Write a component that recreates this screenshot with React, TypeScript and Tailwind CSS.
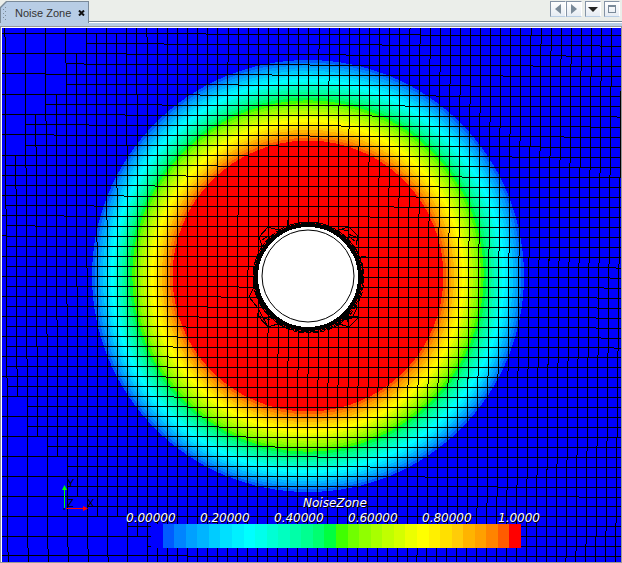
import type { ReactNode } from "react";

const LEVELS = [
  "#0000ff", "#005cff", "#0084ff", "#00a0ff", "#00b4ff", "#00ccff", "#00e0ff", "#00f0ff",
  "#00ffff", "#00ffec", "#00ffd4", "#00ffc0", "#00ffa8", "#00ff90", "#00ff70", "#00ff40",
  "#40ff00", "#70ff00", "#90ff00", "#a8ff00", "#c0ff00", "#d4ff00", "#ecff00", "#ffff00",
  "#fff000", "#ffe000", "#ffcc08", "#ffb400", "#ffa000", "#ff8400", "#ff5c00", "#ff0000",
];

const CENTER = { x: 308, y: 276 };
const OUTER = 216;
const INNER = 135.5;

const LEFT = 2;
const TOP = 28;
const WIDTH = 619;
const HEIGHT = 534;

// mesh lines converge slightly towards the lower right (perspective view)
function colX(i: number, y: number) {
  const x = 5.97 + 10.106 * i - 0.00072 * i * i;
  return x + (0.00585 - 0.0000283 * (x - 5)) * (y - 200);
}

function rowY(j: number, x: number) {
  const y = 33.98 + 10.189 * j - 0.00288 * j * j;
  return y + (0.00495 - 0.0000077 * y) * (x - 200);
}

// first and last row of the columns that stop at a coarser cell
const COL_RANGE: Record<number, [number, number]> = {
  1: [12, 36],
  3: [8, 40],
  5: [6, 42],
  7: [2, 46],
  9: [0, 48],
  11: [0, 48],
  13: [-1, 50],
};

// column where the refined rows begin
const ROW_START: Record<number, number> = {
  1: 8, 3: 6, 5: 6, 7: 4, 9: 2, 11: 2, 13: 0, 15: 0, 17: 0, 19: 0, 21: 0, 23: 0,
  25: 0, 27: 0, 29: 0, 31: 0, 33: 0, 35: 0, 37: 2, 39: 2, 41: 4, 43: 6, 45: 6,
  47: 8, 49: 12, 51: 14,
};

function meshPath() {
  let d = "";
  for (let i = 0; i <= 61; i++) {
    const range = COL_RANGE[i];
    const y1 = range && range[0] >= 0 ? rowY(range[0], 10 * i) : TOP;
    const y2 = range ? rowY(range[1], 10 * i) : TOP + HEIGHT;
    d += `M${colX(i, y1)} ${y1}L${colX(i, y2)} ${y2}`;
  }
  for (let j = 0; j <= 52; j++) {
    const x1 = ROW_START[j] === undefined ? LEFT : colX(ROW_START[j], 28 + 10 * j);
    const x2 = LEFT + WIDTH;
    d += `M${x1} ${rowY(j, x1)}L${x2} ${rowY(j, x2)}`;
  }
  return d;
}

const TICKS = [
  { x: 126, label: "0.00000" },
  { x: 200, label: "0.20000" },
  { x: 274, label: "0.40000" },
  { x: 348, label: "0.60000" },
  { x: 422, label: "0.80000" },
  { x: 498, label: "1.0000" },
];

function LegendText({ x, y, children }: { x: number; y: number; children: string }) {
  return (
    <>
      <text x={x + 1} y={y + 1} fill="#000" aria-hidden="true">{children}</text>
      <text x={x} y={y} fill="#fff">{children}</text>
    </>
  );
}

function Hub() {
  return (
    <g fill="none" stroke="#000">
      <g shapeRendering="crispEdges">
        <path d="M259 237L268 227L278 230M259 237L262 246M268 227L269 236L259 237M268 236L262 240M287 220L288 227" />
        <path d="M338 230L349 227L358 236L356 245M349 227L348 234L358 238M348 236L355 241M340 229L348 231" />
        <path d="M254 287L249 297L258 308L268 327L281 323M258 308L259 317L268 327M256 291L262 308L272 319M258 316L270 320" />
        <path d="M358 304L359 317L349 327L336 323M359 317L347 316L349 327M340 321L352 318L357 308M361 256L366 257" />
        <circle cx="308" cy="277" r="55" strokeDasharray="9 1 14 1" />
        <circle cx="309" cy="278" r="55" strokeDasharray="5 2" />
        <circle cx="308" cy="277" r="52" fill="#fff" strokeWidth="4" />
      </g>
      <circle cx="308" cy="276" r="46" />
    </g>
  );
}

function AxisTriad() {
  return (
    <g>
      <path d="M64.500 508V488" stroke="#00ff00" fill="none" />
      <path d="M64.500 485L67 490H62Z" fill="#00ff00" />
      <path d="M66 508.500H86" stroke="#ff0000" fill="none" />
      <path d="M88 508.500L83 506V511Z" fill="#ff0000" />
      <circle cx="64" cy="509" r="1" fill="#000060" />
      <g className="font-['Liberation_Sans'] text-[11px]" fill="#000">
        <text x="67" y="487">Y</text>
        <text x="67" y="507">Z</text>
        <text x="87" y="507">X</text>
      </g>
    </g>
  );
}

function ContourPlot() {
  const step = (OUTER - INNER) / 30;
  const swatch = 370 / LEVELS.length;

  return (
    <svg
      viewBox={`${LEFT} ${TOP} ${WIDTH} ${HEIGHT}`}
      className="block h-auto w-full bg-[#0000ff]"
      role="img"
      aria-label="NoiseZone contour plot"
    >
      <g shapeRendering="crispEdges">
        {LEVELS.slice(1).map((color, k) => (
          <circle key={color} cx={CENTER.x} cy={CENTER.y} r={OUTER - k * step} fill={color} />
        ))}
      </g>
      <path d={meshPath()} stroke="#000" fill="none" shapeRendering="crispEdges" />
      <Hub />
      <AxisTriad />
      <g shapeRendering="crispEdges">
        {LEVELS.map((color, k) => (
          <rect key={color} x={151 + k * swatch} y="524" width={swatch} height="24" fill={color} />
        ))}
      </g>
      <g className="font-['DejaVu_Sans'] text-[12px] italic">
        <LegendText x={303} y={507}>NoiseZone</LegendText>
        {TICKS.map((t) => (
          <LegendText key={t.label} x={t.x} y={522}>{t.label}</LegendText>
        ))}
      </g>
    </svg>
  );
}

function ToolButton({ label, children }: { label: string; children: ReactNode }) {
  return (
    <button
      type="button"
      aria-label={label}
      className="flex size-4 items-center justify-center border border-r-white border-b-[#b8cde5] border-t-[#8493a5] border-l-[#8493a5] bg-linear-to-b from-white to-[#e6ecf3]"
    >
      {children}
    </button>
  );
}

export default function App() {
  return (
    <div className="bg-[#ebeeea] font-['Liberation_Sans',sans-serif]">
      <header className="flex h-[23px] justify-between border-b border-white">
        <div className="flex h-[22px] grow items-end">
          <div className="z-10 -mb-px h-[22px] bg-[#7a8a99] px-px pt-px [clip-path:polygon(0_6px,6px_0,100%_0,100%_100%,0_100%)]">
            <div className="flex h-full items-center bg-[#b8cde5] pr-[3px] pl-[2px] [clip-path:polygon(0_6px,6px_0,100%_0,100%_100%,0_100%)]">
              <svg width="4" height="14" viewBox="0 0 4 14" fill="#7a8a99" shapeRendering="crispEdges" aria-hidden="true">
                <path d="M0 3h1v1h-1zM2 1h1v1h-1zM0 7h1v1h-1zM2 5h1v1h-1zM0 11h1v1h-1zM2 9h1v1h-1zM2 13h1v1h-1z" />
              </svg>
              <button type="button" role="tab" aria-selected="true" className="pr-[7px] pl-2 text-[11px] leading-4 text-[#333]">
                Noise Zone
              </button>
              <button type="button" aria-label="Close tab" className="flex">
                <svg width="7" height="6" viewBox="0 0 7 6" stroke="#111" strokeWidth="2" aria-hidden="true">
                  <path d="M1 0.500L6 5.500M6 0.500L1 5.500" />
                </svg>
              </button>
            </div>
          </div>
          <div className="h-px grow bg-[#7a8a99]" />
        </div>
        <div className="flex h-[22px] gap-[3px] border-b border-[#7a8a99] pt-px pr-[2px]">
          <div className="flex">
            <ToolButton label="Scroll left">
              <svg width="6" height="10" viewBox="0 0 6 10" fill="#7a8a99"><path d="M6 0V10L0 5Z" /></svg>
            </ToolButton>
            <ToolButton label="Scroll right">
              <svg width="6" height="10" viewBox="0 0 6 10" fill="#7a8a99"><path d="M0 0V10L6 5Z" /></svg>
            </ToolButton>
          </div>
          <ToolButton label="Show opened windows">
            <svg width="10" height="5" viewBox="0 0 10 5" fill="#222"><path d="M0 0H10L5 5Z" /></svg>
          </ToolButton>
          <ToolButton label="Maximize">
            <svg width="8" height="8" viewBox="0 0 8 8" fill="#7a8a99" fillRule="evenodd">
              <path d="M0 0H8V8H0ZM1 2V7H7V2Z" />
            </svg>
          </ToolButton>
        </div>
      </header>
      <div className="h-[3px] bg-[#b8cde5]" />
      <main className="border border-[#999]">
        <div className="border-t border-l border-white">
          <ContourPlot />
        </div>
      </main>
    </div>
  );
}
